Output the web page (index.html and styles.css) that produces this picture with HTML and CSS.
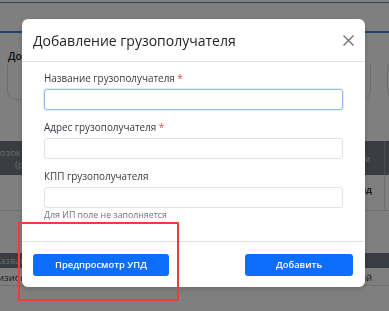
FILE: index.html
```html
<!DOCTYPE html>
<html lang="ru">
<head>
<meta charset="utf-8">
<link rel="stylesheet" href="styles.css">
</head>
<body>
<div class="page">
  <div class="topline"></div>
  <div class="tabs"></div>
  <div class="crumb">Добавление</div>
  <div class="cards">
    <div class="card"></div>
    <div class="card card-2"></div>
  </div>
  <div class="table">
    <div class="thead">
      <div class="cell c1">
        <div class="l1">Перевозок в месяц</div>
        <div class="l2">(руб)</div>
      </div>
      <div class="cell c2">Объем</div>
      <div class="cell c3"></div>
    </div>
    <div class="trow">
      <div class="cell c1"></div>
      <div class="cell c2">Вид</div>
      <div class="cell c3"></div>
    </div>
  </div>
  <div class="table table-2">
    <div class="bar">
      <div class="cell c1">Название</div>
    </div>
    <div class="trow2">
      <div class="cell c1">Дивизион</div>
      <div class="cell c2">Активный</div>
    </div>
  </div>
</div>
<div class="overlay"></div>
<div class="modal">
  <div class="modal-header">
    <div class="modal-title">Добавление грузополучателя</div>
    <svg class="close" width="11" height="11" viewBox="0 0 11 11"><path d="M0.5 0.5 L10.5 10.5 M10.5 0.5 L0.5 10.5" stroke="#6b6b6b" stroke-width="1.2" fill="none"/></svg>
  </div>
  <div class="modal-body">
    <div class="field">
      <div class="label">Название грузополучателя <span class="req">*</span></div>
      <div class="input focus"></div>
    </div>
    <div class="field">
      <div class="label">Адрес грузополучателя <span class="req">*</span></div>
      <div class="input"></div>
    </div>
    <div class="field">
      <div class="label">КПП грузополучателя</div>
      <div class="input"></div>
      <div class="hint">Для ИП поле не заполняется</div>
    </div>
  </div>
  <div class="modal-footer">
    <button class="btn btn-preview">Предпросмотр УПД</button>
    <button class="btn btn-add">Добавить</button>
  </div>
</div>
<div class="annot"></div>
</body>
</html>
```

FILE: styles.css
```css
html, body {
  margin: 0;
  padding: 0;
  width: 389px;
  height: 311px;
  overflow: hidden;
  background: #ffffff;
  font-family: "Open Sans", "Noto Sans", sans-serif;
}

.page {
  width: 389px;
  height: 311px;
  background: #ffffff;
  overflow: hidden;
}

.topline {
  height: 2px;
  border-bottom: 1px solid #4a8fe0;
}

.tabs {
  height: 28px;
  border-bottom: 2px solid #3f86dc;
}

.crumb {
  height: 32px;
  box-sizing: border-box;
  padding: 15px 0 0 8px;
  font-size: 10.5px;
  line-height: 16px;
  color: #222;
  font-weight: 600;
}

.cards {
  display: flex;
  gap: 16px;
  padding-left: 7px;
}

.card {
  width: 362px;
  height: 34px;
  border: 1px solid #d8dadd;
  border-top: none;
  border-radius: 0 0 9px 9px;
  flex: none;
}

.card-2 {
  width: 60px;
}

.table {
  margin-top: 41px;
  margin-left: -60px;
}

.thead {
  display: flex;
  height: 34px;
  background: #747a82;
  color: #d4d6d9;
  font-size: 9.5px;
  line-height: 12px;
}

.cell {
  flex: none;
  box-sizing: border-box;
  white-space: nowrap;
}

.thead .c1 {
  width: 150px;
  padding-top: 6px;
}

.l1 {
  padding-left: 31px;
}

.l2 {
  padding-left: 75px;
}

.thead .c2 {
  width: 295px;
  text-align: right;
  padding: 12px 14px 0 0;
  border-right: 1px solid #9aa0a6;
}

.thead .c3 {
  width: 60px;
}

.trow {
  display: flex;
  height: 35px;
  border-bottom: 1px solid #dcdcdc;
  font-size: 9.5px;
  color: #222;
  font-weight: 600;
}

.trow .c1 {
  width: 150px;
}

.trow .c2 {
  width: 295px;
  text-align: right;
  padding: 8px 12px 0 0;
  border-right: 1px solid #dcdcdc;
}

.table-2 {
  margin-top: 42px;
}

.bar {
  height: 15px;
  background: #747a82;
  color: #d4d6d9;
  font-size: 9.5px;
  line-height: 15px;
}

.bar .c1 {
  padding-left: 53px;
}

.trow2 {
  display: flex;
  height: 17px;
  font-size: 9.5px;
  line-height: 20px;
  color: #333;
  border-bottom: 1px solid #dcdcdc;
}

.trow2 .c1 {
  width: 352px;
  padding-left: 40px;
}

.trow2 .c2 {
  width: 80px;
  text-align: right;
}

.overlay {
  position: fixed;
  inset: 0;
  background: rgba(0, 0, 0, 0.5);
}

.modal {
  position: fixed;
  left: 22px;
  top: 19px;
  width: 343px;
  height: 268px;
  background: #ffffff;
  border-radius: 6px;
  box-shadow: 0 2px 6px rgba(0, 0, 0, 0.15);
  display: flex;
  flex-direction: column;
  overflow: hidden;
}

.modal-header {
  display: flex;
  align-items: center;
  justify-content: space-between;
  height: 43px;
  padding: 0 11px 0 11px;
  border-bottom: 1px solid #e3e3e3;
  box-sizing: border-box;
}

.modal-title {
  font-size: 14px;
  color: #212529;
  line-height: 24px;
  padding-top: 1px;
}

.close {
  margin-top: 1px;
}

.modal-body {
  padding: 8px 22px 0 22px;
  height: 180px;
  box-sizing: border-box;
  border-bottom: 1px solid #e3e3e3;
}

.field {
  margin-bottom: 9px;
}

.label {
  font-size: 9.9px;
  line-height: 16px;
  color: #343a40;
  margin-bottom: 3px;
}

.req {
  color: #e54b4b;
}

.input {
  width: 299px;
  height: 21px;
  box-sizing: border-box;
  border: 1px solid #dfe2e6;
  border-radius: 3px;
  background: #ffffff;
}

.input.focus {
  border-color: #8dbaf5;
  box-shadow: 0 0 0 1px rgba(13, 110, 253, 0.12);
}

.hint {
  font-size: 8.8px;
  line-height: 12px;
  color: #6c757d;
  margin-top: 1px;
}

.modal-footer {
  flex: 1;
  display: flex;
  align-items: center;
  justify-content: space-between;
  padding: 0 12px 0 11px;
}

.btn {
  height: 22px;
  border: none;
  border-radius: 3px;
  background: #0d6efd;
  color: #ffffff;
  font-family: "Open Sans", "Noto Sans", sans-serif;
  font-size: 9.4px;
  font-weight: 600;
  padding: 0;
  line-height: 22px;
}

.btn-preview {
  width: 136px;
}

.btn-add {
  width: 108px;
}

.annot {
  position: fixed;
  left: 18px;
  top: 222px;
  width: 161px;
  height: 79px;
  box-sizing: border-box;
  border: 2px solid #ef3b3b;
}
```
